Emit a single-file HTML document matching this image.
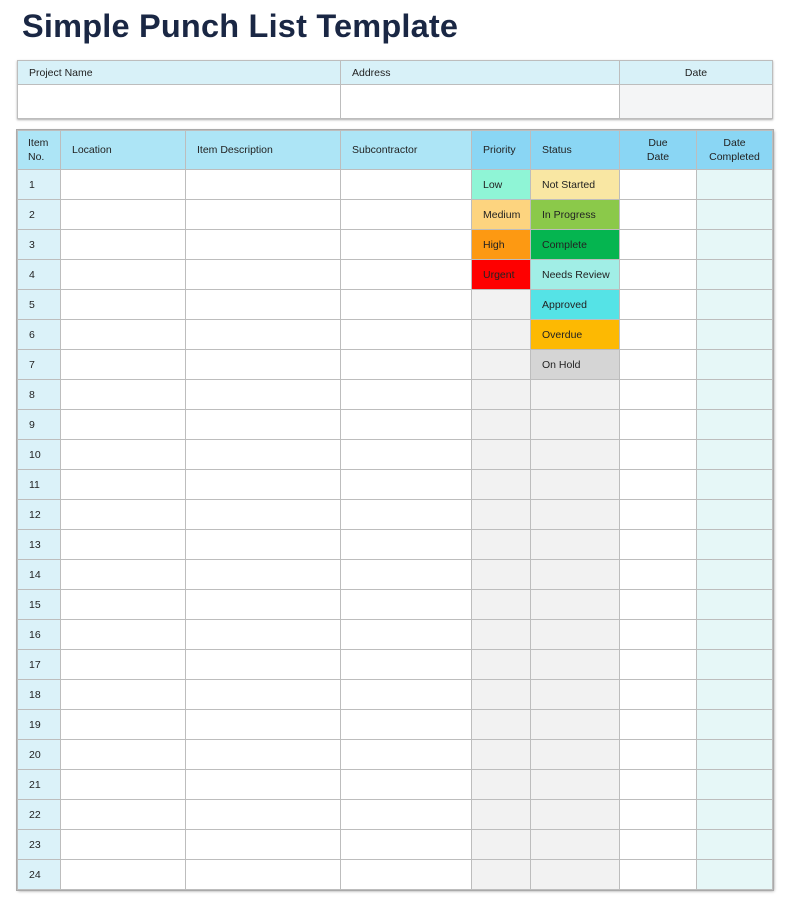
<!DOCTYPE html>
<html><head><meta charset="utf-8"><style>
*{margin:0;padding:0;box-sizing:border-box}
body{width:793px;height:921px;background:#fff;font-family:"Liberation Sans",sans-serif;position:relative;overflow:hidden}
h1{position:absolute;left:22px;top:8px;font-size:32.5px;font-weight:bold;color:#1a2744;letter-spacing:0.2px}
table{position:absolute;border-collapse:collapse;table-layout:fixed;font-size:10.5px;color:#222}
td{border:1px solid #bdbdbd;padding:0 0 0 11px;vertical-align:middle;white-space:nowrap}
#t1{left:17px;top:60px;width:755px;box-shadow:0 1px 2px #aaa}
#t1 tr:first-child td{background:#d8f1f8;height:24px}
#t1 tr:nth-child(2) td{height:34px}
#t2{left:17px;top:130px;width:755px;box-shadow:1px 1px 3px #999;outline:1px solid #aaa}
#t2 tr td{height:30px}
#t2 tr.h td{height:39px;background:#ade5f6}
#t2 tr.h td.d{background:#8ad6f4}
.c{text-align:center;padding:0}
.n{background:#dbf2f9}
.dc{background:#e6f7f7}
.g{background:#f2f2f2}
</style></head><body>
<h1>Simple Punch List Template</h1>
<table id="t1"><colgroup><col style="width:323px"><col style="width:279px"><col style="width:153px"></colgroup>
<tr><td>Project Name</td><td>Address</td><td class="c">Date</td></tr>
<tr><td></td><td></td><td style="background:#f4f5f6"></td></tr></table>
<table id="t2"><colgroup><col style="width:43px"><col style="width:125px"><col style="width:155px"><col style="width:131px"><col style="width:59px"><col style="width:89px"><col style="width:77px"><col style="width:76px"></colgroup>
<tr class="h"><td style="padding-left:10px;line-height:14px;white-space:normal">Item No.</td><td>Location</td><td>Item Description</td><td>Subcontractor</td><td class="d">Priority</td><td class="d">Status</td><td class="d c" style="line-height:14px">Due<br>Date</td><td class="d c" style="line-height:14px">Date<br>Completed</td></tr>
<tr><td class="n">1</td><td></td><td></td><td></td><td style="background:#8ff5d6">Low</td><td style="background:#f9e7a3">Not Started</td><td></td><td class="dc"></td></tr>
<tr><td class="n">2</td><td></td><td></td><td></td><td style="background:#fdd47f">Medium</td><td style="background:#8bc94a">In Progress</td><td></td><td class="dc"></td></tr>
<tr><td class="n">3</td><td></td><td></td><td></td><td style="background:#fd9912">High</td><td style="background:#05b550">Complete</td><td></td><td class="dc"></td></tr>
<tr><td class="n">4</td><td></td><td></td><td></td><td style="background:#fe0000">Urgent</td><td style="background:#a1eee6">Needs Review</td><td></td><td class="dc"></td></tr>
<tr><td class="n">5</td><td></td><td></td><td></td><td class="g"></td><td style="background:#55e3e6">Approved</td><td></td><td class="dc"></td></tr>
<tr><td class="n">6</td><td></td><td></td><td></td><td class="g"></td><td style="background:#fdb902">Overdue</td><td></td><td class="dc"></td></tr>
<tr><td class="n">7</td><td></td><td></td><td></td><td class="g"></td><td style="background:#d5d5d5">On Hold</td><td></td><td class="dc"></td></tr>
<tr><td class="n">8</td><td></td><td></td><td></td><td class="g"></td><td class="g"></td><td></td><td class="dc"></td></tr>
<tr><td class="n">9</td><td></td><td></td><td></td><td class="g"></td><td class="g"></td><td></td><td class="dc"></td></tr>
<tr><td class="n">10</td><td></td><td></td><td></td><td class="g"></td><td class="g"></td><td></td><td class="dc"></td></tr>
<tr><td class="n">11</td><td></td><td></td><td></td><td class="g"></td><td class="g"></td><td></td><td class="dc"></td></tr>
<tr><td class="n">12</td><td></td><td></td><td></td><td class="g"></td><td class="g"></td><td></td><td class="dc"></td></tr>
<tr><td class="n">13</td><td></td><td></td><td></td><td class="g"></td><td class="g"></td><td></td><td class="dc"></td></tr>
<tr><td class="n">14</td><td></td><td></td><td></td><td class="g"></td><td class="g"></td><td></td><td class="dc"></td></tr>
<tr><td class="n">15</td><td></td><td></td><td></td><td class="g"></td><td class="g"></td><td></td><td class="dc"></td></tr>
<tr><td class="n">16</td><td></td><td></td><td></td><td class="g"></td><td class="g"></td><td></td><td class="dc"></td></tr>
<tr><td class="n">17</td><td></td><td></td><td></td><td class="g"></td><td class="g"></td><td></td><td class="dc"></td></tr>
<tr><td class="n">18</td><td></td><td></td><td></td><td class="g"></td><td class="g"></td><td></td><td class="dc"></td></tr>
<tr><td class="n">19</td><td></td><td></td><td></td><td class="g"></td><td class="g"></td><td></td><td class="dc"></td></tr>
<tr><td class="n">20</td><td></td><td></td><td></td><td class="g"></td><td class="g"></td><td></td><td class="dc"></td></tr>
<tr><td class="n">21</td><td></td><td></td><td></td><td class="g"></td><td class="g"></td><td></td><td class="dc"></td></tr>
<tr><td class="n">22</td><td></td><td></td><td></td><td class="g"></td><td class="g"></td><td></td><td class="dc"></td></tr>
<tr><td class="n">23</td><td></td><td></td><td></td><td class="g"></td><td class="g"></td><td></td><td class="dc"></td></tr>
<tr><td class="n">24</td><td></td><td></td><td></td><td class="g"></td><td class="g"></td><td></td><td class="dc"></td></tr>
</table>
</body></html>
